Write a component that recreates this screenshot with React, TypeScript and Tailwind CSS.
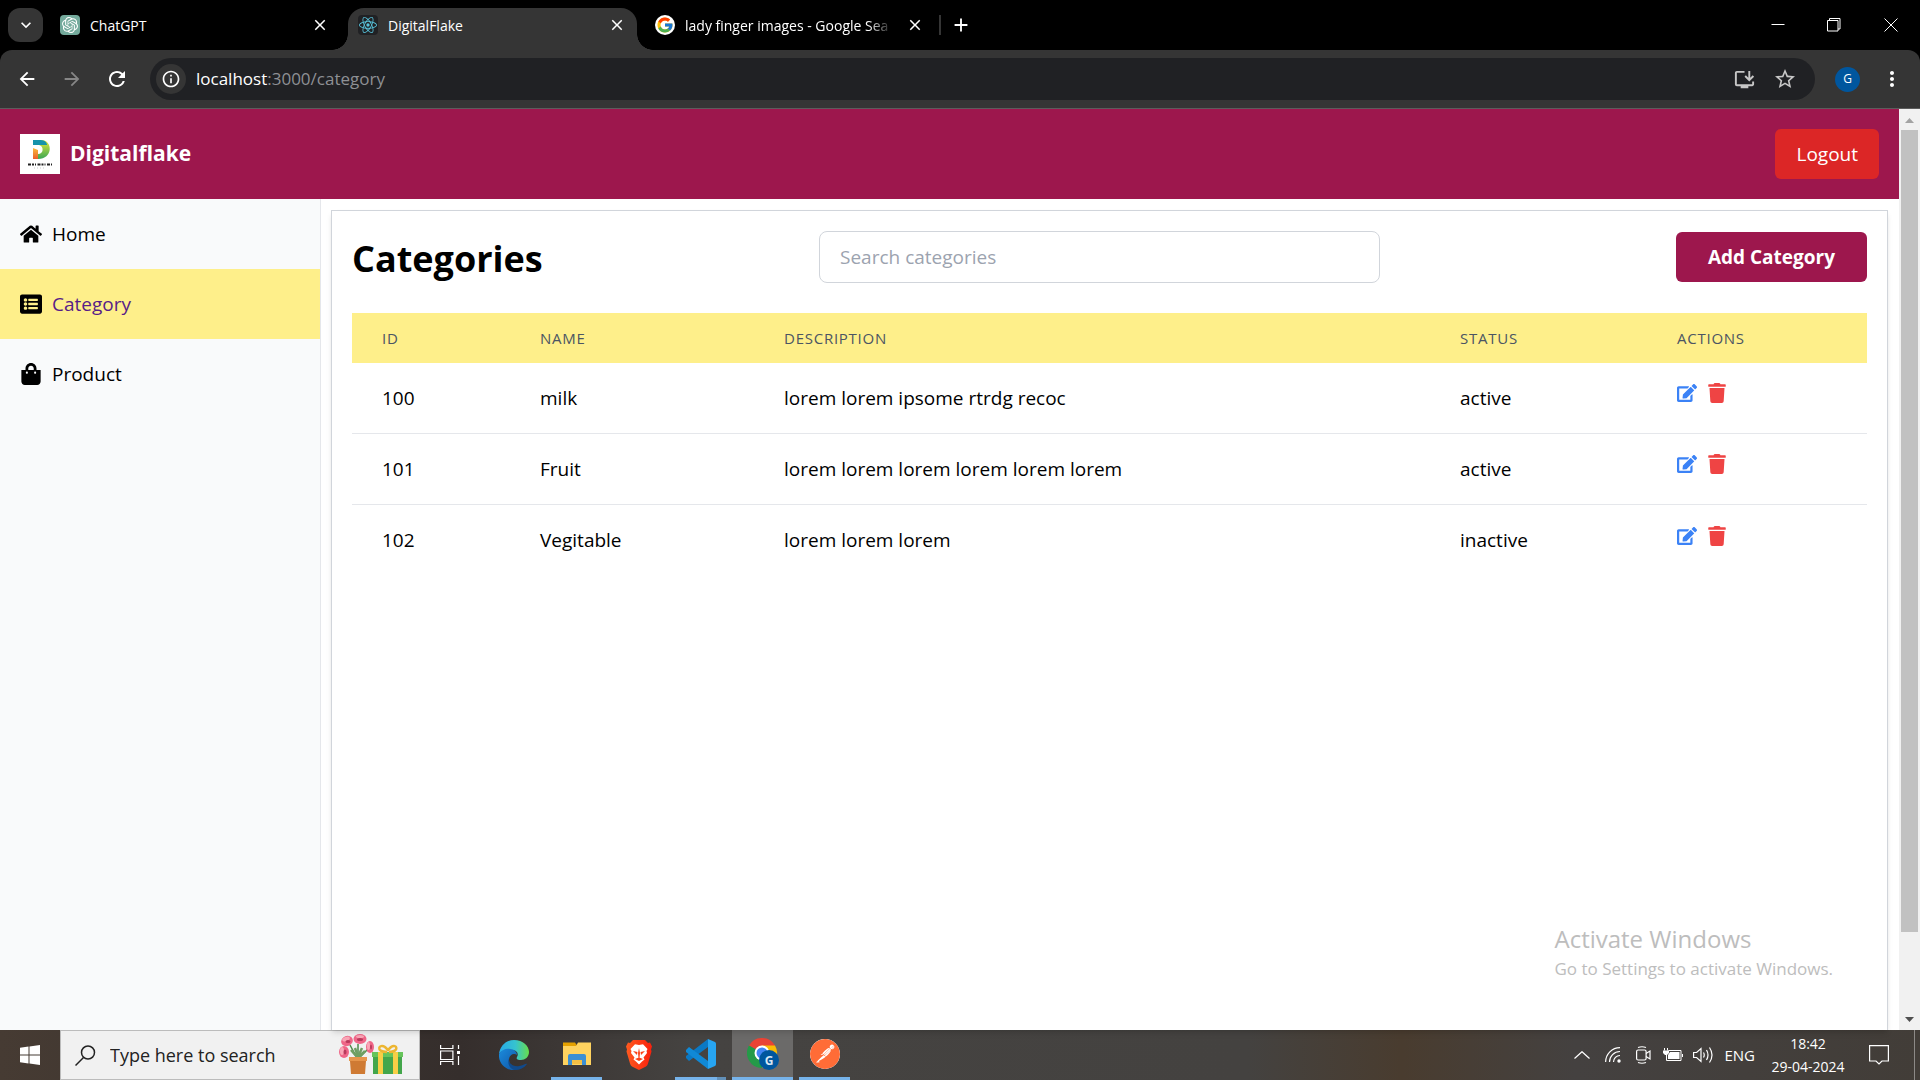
import React from "react";
import { FaHome, FaListAlt, FaShoppingBag, FaEdit, FaTrash } from "react-icons/fa";
import { FcGoogle } from "react-icons/fc";
import { SiOpenai, SiReact, SiPostman } from "react-icons/si";
import { MdArrowBack, MdArrowForward, MdRefresh, MdInfoOutline, MdOutlineInstallDesktop, MdStarBorder, MdMoreVert, MdKeyboardArrowDown, MdClose, MdAdd } from "react-icons/md";

const rows = [
  { id: 100, name: "milk", description: "lorem lorem ipsome rtrdg recoc", status: "active" },
  { id: 101, name: "Fruit", description: "lorem lorem lorem lorem lorem lorem", status: "active" },
  { id: 102, name: "Vegitable", description: "lorem lorem lorem", status: "inactive" },
];

function TabStrip() {
  return (
    <div className="flex h-[50px] shrink-0 bg-black text-[14px] text-white">
      <div className="flex w-[348px] items-center">
        <button aria-label="Search tabs" className="ml-2 flex h-[34px] w-[35px] shrink-0 items-center justify-center rounded-xl bg-[#353535]">
          <MdKeyboardArrowDown className="size-5" />
        </button>
        <div className="ml-[17px] flex flex-1 items-center">
          <span className="flex size-5 items-center justify-center rounded bg-[#74aa9c]">
            <SiOpenai className="size-4" />
          </span>
          <span className="ml-[10px] flex-1">ChatGPT</span>
          <button aria-label="Close ChatGPT tab" className="mr-[19px]">
            <MdClose className="size-[18px]" />
          </button>
        </div>
      </div>
      <div className="relative mt-2 flex w-[289px] items-center rounded-t-2xl bg-[#353535] pb-2">
        <span className="absolute bottom-0 -left-4 size-4 bg-[radial-gradient(circle_at_0_0,#000_15.5px,#353535_16px)]" />
        <span className="absolute -right-4 bottom-0 size-4 bg-[radial-gradient(circle_at_100%_0,#000_15.5px,#353535_16px)]" />
        <span className="ml-[10px] flex size-5 items-center justify-center rounded-sm bg-[#202124]">
          <SiReact className="size-[18px] text-[#58c4dc]" />
        </span>
        <span className="ml-[10px] flex-1">DigitalFlake</span>
        <button aria-label="Close DigitalFlake tab" className="mr-[11px]">
          <MdClose className="size-[18px]" />
        </button>
      </div>
      <div className="flex flex-1 items-center">
        <span className="ml-[18px] flex size-5 shrink-0 items-center justify-center rounded-full bg-white">
          <FcGoogle className="size-[18px]" />
        </span>
        <span className="ml-[10px] w-[208px] whitespace-nowrap [mask-image:linear-gradient(to_right,#000_88%,transparent)]">
          lady finger images - Google Sea
        </span>
        <button aria-label="Close search tab" className="ml-[13px]">
          <MdClose className="size-[18px]" />
        </button>
        <span className="ml-[15px] h-5 w-0.5 bg-[#353535]" />
        <button aria-label="New tab" className="ml-[9px]">
          <MdAdd className="size-[22px]" />
        </button>
      </div>
      <div className="flex items-center pr-px">
        <button aria-label="Minimize" className="flex w-[57px] justify-center">
          <svg className="size-[14px]" viewBox="0 0 14 14" stroke="currentColor"><path d="M.5 6.500h13" /></svg>
        </button>
        <button aria-label="Restore" className="flex w-[56px] justify-center">
          <svg className="size-[14px]" viewBox="0 0 14 14" fill="none" stroke="currentColor"><path d="M.5 2.500h10.500v10.500H.5zM2.500 2.500V.5H13v10.500h-2" /></svg>
        </button>
        <button aria-label="Close window" className="flex w-[57px] justify-center">
          <svg className="size-[14px]" viewBox="0 0 14 14" stroke="currentColor"><path d="M.5.5l13 13M13.500.5l-13 13" /></svg>
        </button>
      </div>
    </div>
  );
}

function Toolbar() {
  return (
    <div className="shrink-0 bg-black">
      <div className="flex h-[59px] items-center rounded-t-xl border-b border-[#5c5c5c] bg-[#353535] text-white">
        <button aria-label="Back" className="ml-4"><MdArrowBack className="size-[22px]" /></button>
        <button aria-label="Forward" className="ml-[23px] text-[#868686]"><MdArrowForward className="size-[22px]" /></button>
        <button aria-label="Reload" className="ml-[22px]"><MdRefresh className="size-6" /></button>
        <div className="ml-[21px] flex h-[42px] flex-1 items-center rounded-full bg-[#202124]">
          <button aria-label="Site information" className="ml-[6px] flex size-[30px] items-center justify-center rounded-full bg-[#353535]">
            <MdInfoOutline className="size-5" />
          </button>
          <p className="ml-[10px] flex-1 text-[17px] text-[#8e9094]">
            <span className="text-white">localhost</span>:3000/category
          </p>
          <button aria-label="Install app" className="text-[#c7c7c7]"><MdOutlineInstallDesktop className="size-[23px]" /></button>
          <button aria-label="Bookmark" className="mr-[18px] ml-[17px] text-[#c7c7c7]"><MdStarBorder className="size-6" /></button>
        </div>
        <button aria-label="Profile" className="ml-5 size-[25px] rounded-full bg-[#00569e] text-[12px]">G</button>
        <button aria-label="Menu" className="mr-4 ml-5"><MdMoreVert className="size-6" /></button>
      </div>
    </div>
  );
}

function Logo() {
  return (
    <svg className="size-10 bg-white" viewBox="0 0 40 40" role="img" aria-label="Digitalflake logo">
      <defs>
        <linearGradient id="bowl" x1="0" y1="0" x2="0" y2="1">
          <stop offset="0" stopColor="#e3ea3a" />
          <stop offset="1" stopColor="#3aa655" />
        </linearGradient>
        <linearGradient id="stem" x1="0" y1="0" x2="0" y2="1">
          <stop offset="0" stopColor="#f9bd3c" />
          <stop offset="1" stopColor="#ec5f2b" />
        </linearGradient>
      </defs>
      <path d="M22 6c11 1 11 19-4 19v-5c6 0 6-8 1-9z" fill="url(#bowl)" />
      <path d="M13 6h8c4 0 6 3 6 5H13z" fill="#1793ab" />
      <path d="M13 14l5 2v9h-5z" fill="url(#stem)" />
      <path d="M8 30.500h24" stroke="#222" strokeWidth="2" strokeDasharray="3 1 2 1 1 1.500" />
      <path d="M14 34h12" stroke="#bbb" strokeWidth=".8" strokeDasharray="1 2" />
    </svg>
  );
}

const navItem = "flex h-[70px] items-center gap-[10px] pl-5 text-[19px]";

function Sidebar() {
  return (
    <nav className="w-[321px] shrink-0 border-r border-[#e5e7eb] bg-[#f9fafb] text-black">
      <a href="#home" className={navItem}><FaHome className="size-[22px]" />Home</a>
      <a href="#category" aria-current="page" className={navItem + " bg-[#feef8a]"}>
        <FaListAlt className="size-[22px]" /><span className="text-[#581c87]">Category</span>
      </a>
      <a href="#product" className={navItem}><FaShoppingBag className="size-[22px]" />Product</a>
    </nav>
  );
}

function Categories() {
  return (
    <main className="mt-[11px] mr-[11px] ml-[10px] min-w-0 flex-1 border border-b-0 border-[#d1d5db] bg-white px-5 pt-5 shadow-md">
      <div className="flex items-center justify-between">
        <h1 className="mt-1 text-[36px] leading-[48px] font-bold">Categories</h1>
        <input aria-label="Search categories" placeholder="Search categories" className="mr-5 h-[52px] w-[37%] rounded-lg border border-[#d1d5db] px-5 text-[19px] placeholder:text-[#9ca3af]" />
        <button className="h-[50px] rounded-md bg-[#9d174d] px-8 text-[19px] font-bold text-white">Add Category</button>
      </div>
      <table className="mt-[30px] w-full table-fixed border-separate border-spacing-0 text-left">
        <colgroup>
          <col className="w-[158px]" />
          <col className="w-[244px]" />
          <col />
          <col className="w-[217px]" />
          <col className="w-[220px]" />
        </colgroup>
        <thead className="bg-[#feef8a] text-[15px] tracking-wider text-[#4b5563] uppercase">
          <tr className="h-[50px]">
            {["ID", "Name", "Description", "Status", "Actions"].map((h) => (
              <th key={h} className="px-[30px] font-medium">{h}</th>
            ))}
          </tr>
        </thead>
        <tbody className="text-[19px] [&>tr:not(:last-child)>td]:border-b [&>tr>td]:border-[#e5e7eb]">
          {rows.map((r) => (
            <tr key={r.id} className="h-[71px]">
              <td className="px-[30px]">{r.id}</td>
              <td className="px-[30px]">{r.name}</td>
              <td className="px-[30px]">{r.description}</td>
              <td className="px-[30px]">{r.status}</td>
              <td className="px-[30px] pb-[10px]">
                <div className="flex gap-[10px]">
                  <button aria-label={`Edit ${r.name}`} className="text-[#3b82f6]"><FaEdit className="size-5" /></button>
                  <button aria-label={`Delete ${r.name}`} className="text-[#ef4444]"><FaTrash className="size-5" /></button>
                </div>
              </td>
            </tr>
          ))}
        </tbody>
      </table>
    </main>
  );
}

function Scrollbar() {
  return (
    <div className="flex w-[21px] shrink-0 flex-col items-center bg-[#f1f1f1]">
      <svg className="size-[21px]" viewBox="0 0 21 21"><path d="M6 14h9l-4.500-5z" fill="#a3a3a3" /></svg>
      <div className="w-[17px] flex-[802] bg-[#c1c1c1]" />
      <div className="flex-[77]" />
      <svg className="size-[21px]" viewBox="0 0 21 21"><path d="M6 8h9l-4.500 5z" fill="#505050" /></svg>
    </div>
  );
}

function Gifts() {
  return (
    <svg className="h-[42px] w-[66px]" viewBox="0 0 66 42" aria-hidden="true">
      <path d="M18 24L11 11M19 24V10M20 24l9-9" stroke="#4d8b4a" strokeWidth="1.500" fill="none" />
      <path d="M12 16l6 7M26 17l-6 6M16 14l3 9 4-9" stroke="#6f9f62" strokeWidth="2.500" fill="none" />
      <g fill="#ef6688">
        <ellipse cx="8" cy="7" rx="6" ry="5" transform="rotate(-20 8 7)" /><ellipse cx="21" cy="5" rx="6.500" ry="5" />
        <ellipse cx="5" cy="18" rx="5" ry="6" /><ellipse cx="31" cy="13" rx="4" ry="6" />
      </g>
      <g fill="#f9a6b6">
        <ellipse cx="7" cy="5" rx="4" ry="2" transform="rotate(-20 7 5)" /><ellipse cx="21" cy="2.500" rx="4" ry="1.500" />
        <ellipse cx="3" cy="17" rx="2" ry="4" /><ellipse cx="29.500" cy="12" rx="1.500" ry="4" />
      </g>
      <g fill="#b93a5c">
        <ellipse cx="9" cy="7.500" rx="2.500" ry="1.500" /><ellipse cx="21" cy="5.500" rx="3" ry="1.500" />
        <ellipse cx="6" cy="18" rx="1.500" ry="2.500" /><ellipse cx="32" cy="13" rx="1" ry="2.500" />
      </g>
      <path d="M10 23h18v4h-1l-1 13H12l-1-13h-1z" fill="#cf7a33" />
      <path d="M10 23h18v4H10z" fill="#e6954b" />
      <path d="M34 21h29v19H34z" fill="#43a64b" />
      <path d="M33 18h31v5H33z" fill="#66c45b" />
      <path d="M39 18h5v22h-5zM54 18h5v22h-5z" fill="#f7cf46" />
      <path d="M48 18c-12 0-8-9-2-5l3 3 3-3c6-4 9 5-2 5" fill="none" stroke="#edb632" strokeWidth="2.500" />
    </svg>
  );
}

function EdgeIcon() {
  return (
    <svg className="size-[30px]" viewBox="0 0 30 30">
      <defs>
        <linearGradient id="edgeTop" x1="0" x2="1"><stop offset="0" stopColor="#26a9e8" /><stop offset=".55" stopColor="#36c3cf" /><stop offset="1" stopColor="#67dd4b" /></linearGradient>
        <linearGradient id="edgeLow" x1="0" y1="0" x2="1" y2="1"><stop offset="0" stopColor="#1b8bdc" /><stop offset="1" stopColor="#0f55a5" /></linearGradient>
      </defs>
      <path d="M0 14C1 6 7 0 15 0c9 0 15 6 15 12 0 5-4 8-8 8-4 0-5-1-4-3 2-3 0-7-5-7C7 9 2 11 0 14z" fill="url(#edgeTop)" />
      <path d="M0 14c2-4 7-6 11-5 4 0 7 3 7 6-2-2-8-1-8 5 0 5 4 9 9 10C8 32-1 24 0 14z" fill="url(#edgeLow)" />
      <path d="M10 18c-1 6 5 9 10 8 4 0 7-3 8-2-3 4-7 6-12 6-5-1-8-6-6-12z" fill="#114a8b" />
    </svg>
  );
}

function FolderIcon() {
  return (
    <svg className="size-[30px]" viewBox="0 0 30 30">
      <path d="M1 3.500h12l2 3v4H1z" fill="#e5a100" />
      <path d="M1 7h13l2-3.500h13V26H1z" fill="#ffd35f" />
      <path d="M6 26V17q0-2 2-2h14q2 0 2 2v9h-4v-5H10v5z" fill="#3c8fd3" />
      <path d="M10 21h10v4H10z" fill="#f4bf45" />
    </svg>
  );
}

function BraveIcon() {
  return (
    <svg className="size-[30px]" viewBox="0 0 30 30">
      <defs>
        <linearGradient id="brave"><stop offset="0" stopColor="#ff5a1f" /><stop offset="1" stopColor="#f9200c" /></linearGradient>
      </defs>
      <path d="M9 0h12l3 3 2-.500 2 4-1 3 .5 2-3.500 12q-.5 2-2 3l-7 3.500-7-3.500q-1.500-1-2-3L2.500 11.500l.5-2-1-3 2-4L6 3z" fill="url(#brave)" />
      <path d="M15 5l4-.800 4.500 4.800-1 2 .5 2-3.500 4.500 1 2-2.500 2-3 3-3-3-2.500-2 1-2L7 13l.5-2-1-2L11 4.200z" fill="#fff" />
      <path d="M9 11l4.500 1-.5 3zM21 11l-4.500 1 .5 3zM15 8l1 5-.5 5h-1l-.5-5zM11 19l4-1.500 4 1.500-4 2z" fill="#fb4117" />
    </svg>
  );
}

function VsCodeIcon() {
  return (
    <svg className="size-[30px]" viewBox="0 0 30 30">
      <path d="M22 0v8L3 22l-3-3v-2z" fill="#0b79c4" />
      <path d="M0 11l3-3 19 14v8L0 13z" fill="#1089d6" />
      <path d="M22 0l7 3q1 .5 1 2v20q0 1.500-1 2l-7 3z" fill="#27a5f2" />
    </svg>
  );
}

function ChromeIcon() {
  return (
    <svg className="h-8 w-8" viewBox="0 0 32 32">
      <path d="M15 15L2 7.500A15 15 0 0 1 28 7.500z" fill="#ea4335" />
      <path d="M15 15V7.500h13A15 15 0 0 1 15 30z" fill="#fbbc05" />
      <path d="M15 15l6 4-6 11A15 15 0 0 1 2 7.500z" fill="#249a48" />
      <circle cx="15" cy="15" r="7.500" fill="#fff" />
      <circle cx="15" cy="15" r="5.500" fill="#4285f4" />
      <circle cx="22" cy="22" r="10" fill="#00569e" />
      <text x="22" y="26.500" textAnchor="middle" fontSize="12" fontWeight="700" fill="#d8e6f3">G</text>
    </svg>
  );
}

function Taskbar() {
  return (
    <footer className="flex h-[50px] shrink-0 items-center bg-[linear-gradient(to_right,#463b33,#352e2c_24%,#454341_36%,#444240_65%,#493c2f_73%,#444140_82%,#423d38)] text-white">
      <button aria-label="Start" className="flex w-[60px] shrink-0 justify-center">
        <svg className="size-5" viewBox="0 0 20 20" fill="currentColor"><path d="M0 2.800L8.500 1.600v7.900H0zM9.500 1.500L20 0v9.500H9.500zM0 10.500h8.500v7.900L0 17.200zM9.500 10.500H20V20L9.500 18.500z" /></svg>
      </button>
      <label className="flex h-full w-[360px] shrink-0 items-center border border-[#bcbcbc] bg-[#f1f1f1] text-[#222]">
        <svg className="ml-[14px] size-[21px] shrink-0" viewBox="0 0 21 21" fill="none" stroke="currentColor" strokeWidth="1.500"><circle cx="13" cy="7.500" r="6.500" /><path d="M8.500 12.500L.5 20.500" /></svg>
        <input aria-label="Type here to search" placeholder="Type here to search" className="ml-[14px] w-[229px] bg-transparent text-[18px] placeholder:text-[#222]" />
        <Gifts />
      </label>
      <button aria-label="Task view" className="flex w-[60px] shrink-0 justify-center">
        <svg className="size-5" viewBox="0 0 20 20" fill="none" stroke="currentColor" strokeWidth="1.200"><path d="M.6 0v3.500h12.300V0M.6 20v-3.500h12.300V20M.6 6h12.300v8.500H.6zM18.500 0v4M18.500 11v9" /><path d="M17 6h3v3h-3z" fill="currentColor" stroke="none" /></svg>
      </button>
      <div className="flex h-full">
        <button aria-label="Microsoft Edge" className="flex w-[68px] items-center justify-center"><EdgeIcon /></button>
        <button aria-label="File Explorer" className="ml-[3px] flex w-[51px] items-center justify-center border-b-[3px] border-[#76b3ea]"><FolderIcon /></button>
        <button aria-label="Brave" className="flex w-[73px] items-center justify-center"><BraveIcon /></button>
        <button aria-label="Visual Studio Code" className="flex w-[51px] items-center justify-center border-b-[3px] [border-image:linear-gradient(to_right,#76b3ea_78%,#6290b8_78%)_3]"><VsCodeIcon /></button>
        <button aria-label="Google Chrome" className="mx-[6px] flex w-[61px] items-center justify-center border-b-[3px] border-[#76b3ea] bg-[#6b6a69]"><ChromeIcon /></button>
        <button aria-label="Postman" className="flex w-[51px] items-center justify-center border-b-[3px] border-[#76b3ea]"><SiPostman className="size-[30px] rounded-full bg-white text-[#ff6c37]" /></button>
      </div>
      <div className="ml-auto flex h-full items-center text-[15px] [&>svg]:shrink-0">
        <svg className="h-2 w-4" viewBox="0 0 16 8" fill="none" stroke="currentColor" strokeWidth="1.200"><path d="M.5 7.500L8 .7l7.500 6.800" /></svg>
        <svg className="ml-[15px] size-4" viewBox="0 0 16 16" fill="none" stroke="currentColor" strokeWidth="1.200"><path d="M.6 15A14.400 14.400 0 0 1 15 .6M4.500 15A10.500 10.500 0 0 1 15 4.500M8.500 15A6.500 6.500 0 0 1 15 8.500" /><circle cx="14" cy="14" r="1.700" fill="currentColor" stroke="none" /></svg>
        <svg className="ml-[15px] h-[18px] w-[15px]" viewBox="0 0 15 18" fill="none" stroke="currentColor" strokeWidth="1.200"><rect x=".6" y="4" width="9.500" height="10" rx="1.500" /><path d="M10 7.500L14 5v8l-4-2.500M2 1.500q4-1.500 8 0M2 16.500q4 1.500 8 0" /></svg>
        <svg className="ml-3 h-[14px] w-5" viewBox="0 0 20 14" fill="none" stroke="currentColor"><path d="M5.500 2.500h12.500v10H3.500V7M19.500 6v3M1.500 0v2.500M4.500 0v2.500" /><path d="M7 4h9.500v7H5V7zM0 2.500h6V5L4 7H2L0 5z" fill="currentColor" stroke="none" /></svg>
        <svg className="ml-[10px] h-[18px] w-[21px]" viewBox="0 0 21 18" fill="none" stroke="currentColor" strokeWidth="1.200"><path d="M.6 6.500h3L8 2.500v13l-4.400-4h-3zM10.500 6.500q1.500 2.500 0 5M13.500 4q3 5 0 10M16.500 1.500q5 7.500 0 15" /></svg>
        <span className="ml-[10px]">ENG</span>
        <div className="ml-[15px] flex w-[76px] flex-col items-center text-[14px] leading-[23px]"><span>18:42</span><span>29-04-2024</span></div>
        <svg className="mr-[25px] ml-[23px] size-5" viewBox="0 0 20 20" fill="none" stroke="currentColor" strokeWidth="1.200"><path d="M.6.6h18.800v15.400h-6.400L10 19l-3-3H.6z" /></svg>
        <span className="mr-[5px] h-full w-px bg-[#8c8986]" />
      </div>
    </footer>
  );
}

export default function App() {
  return (
    <div className="flex h-screen flex-col overflow-hidden bg-white font-['Segoe_UI','Open_Sans',sans-serif] text-black">
      <TabStrip />
      <Toolbar />
      <div className="relative flex min-h-0 flex-1">
        <div className="flex min-w-0 flex-1 flex-col">
          <header className="flex h-[90px] shrink-0 items-center bg-[#9d174d] px-5 text-white">
            <Logo />
            <span className="ml-[10px] text-[21px] font-bold">Digitalflake</span>
            <button className="ml-auto h-[50px] rounded-md bg-[#dc2626] px-[21px] text-[19px]">Logout</button>
          </header>
          <div className="flex min-h-0 flex-1">
            <Sidebar />
            <Categories />
          </div>
        </div>
        <Scrollbar />
        <div className="pointer-events-none absolute right-[87px] bottom-[48px] text-[#bdbdbd]">
          <p className="text-[24px] leading-[34px]">Activate Windows</p>
          <p className="text-[17px] leading-[26px]">Go to Settings to activate Windows.</p>
        </div>
      </div>
      <Taskbar />
    </div>
  );
}
